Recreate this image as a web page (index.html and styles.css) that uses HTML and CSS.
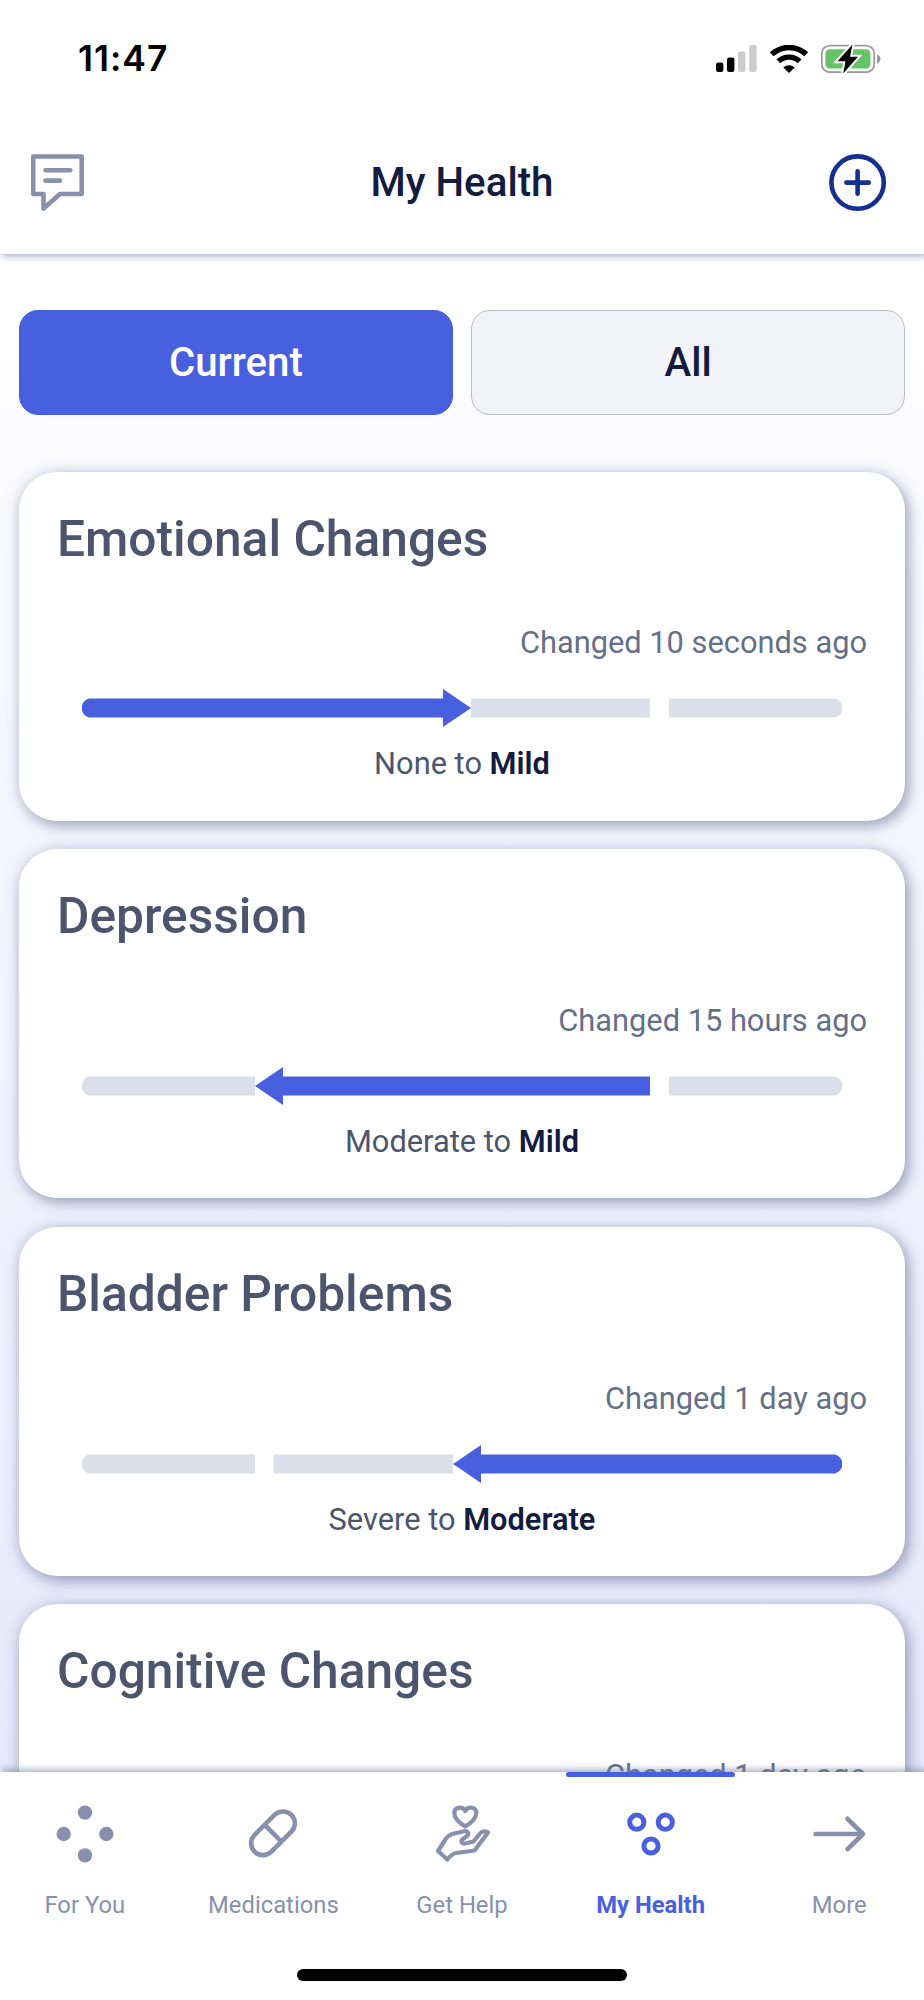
FILE: index.html
```html
<!DOCTYPE html>
<html lang="en">
<head>
<meta charset="UTF-8">
<meta name="viewport" content="width=device-width, initial-scale=1.0">
<title>My Health</title>
<link rel="stylesheet" href="styles.css">
</head>
<body>

<header class="header">
  <div class="status-bar">
    <span class="time">11:47</span>
    <div class="status-icons">
      <svg class="signal" width="41" height="28" viewBox="0 0 41 28">
        <rect x="0" y="17.5" width="7.4" height="9.5" rx="2.2"/>
        <rect x="11" y="12.5" width="7.4" height="14.5" rx="2.2"/>
        <rect x="22" y="6.5" width="7.4" height="20.5" rx="2.2" fill="#ccc"/>
        <rect x="33.2" y="0" width="7.4" height="27" rx="2.2" fill="#ccc"/>
      </svg>
      <svg class="wifi" width="38" height="28" viewBox="0 0 38 28">
        <path d="M1.8 9.3a25 25 0 0 1 34.4 0" fill="none" stroke="#000" stroke-width="5.4"/>
        <path d="M8.4 16.4a15.2 15.2 0 0 1 21.2 0" fill="none" stroke="#000" stroke-width="5.4"/>
        <path d="M13.3 22.4a8.6 8.6 0 0 1 11.4 0L19 28z"/>
      </svg>
      <svg class="battery" width="60" height="30" viewBox="0 0 60 30">
        <rect x="0.8" y="1.6" width="52.4" height="26.6" rx="8" fill="none" stroke="#999" stroke-width="1.7"/>
        <path d="M56 10.5c4.6 1.6 4.6 7.4 0 9z" fill="#999"/>
        <rect x="4.4" y="5.2" width="45" height="19.4" rx="4.5" fill="#65c466"/>
        <path d="M31.5 0.5L16.5 17.2H24.5L22.2 29.5L37 12.7H29z" stroke="#fff" stroke-width="4"/>
        <path d="M31.5 0.5L16.5 17.2H24.5L22.2 29.5L37 12.7H29z"/>
      </svg>
    </div>
  </div>
  <div class="title-bar">
    <svg width="54" height="58" viewBox="0 0 54 58" fill="none" stroke="#8990ad" stroke-width="4.6" stroke-linecap="round" stroke-linejoin="round">
      <path d="M2.2 2.5h48.5v37.5H29L12.5 54.5V40H2.2z"/>
      <path d="M14.500 16.200H39.300M14.500 26.600H29"/>
    </svg>
    <h1>My Health</h1>
    <svg width="58" height="58" viewBox="0 0 58 58" fill="none" stroke="#15308f" stroke-width="4.6" stroke-linecap="round">
      <circle cx="28.600" cy="28.600" r="26.200"/>
      <path d="M28.600 17.400v22.400M17.400 28.600h22.400"/>
    </svg>
  </div>
</header>

<main>
  <div class="tabs">
    <button class="tab active">Current</button>
    <button class="tab">All</button>
  </div>

  <section class="card">
    <h2>Emotional Changes</h2>
    <p class="changed">Changed 10 seconds ago</p>
    <svg class="scale" viewBox="0 0 760 38">
      <path class="on" d="M7 9.5H361V0L389 19L361 38V28.5H7A9.8 9.8 0 0 1 7 9.5z"/>
      <path d="M389 9.5h179v19H389z"/>
      <path d="M587 9.5H753A9.8 9.8 0 0 1 753 28.5H587z"/>
    </svg>
    <p class="result">None to <b>Mild</b></p>
  </section>

  <section class="card">
    <h2>Depression</h2>
    <p class="changed">Changed 15 hours ago</p>
    <svg class="scale" viewBox="0 0 760 38">
      <path d="M173 9.5H7A9.8 9.8 0 0 0 7 28.5H173z"/>
      <path class="on" d="M568 9.5H201V0L173 19L201 38V28.5H568z"/>
      <path d="M587 9.5H753A9.8 9.8 0 0 1 753 28.5H587z"/>
    </svg>
    <p class="result">Moderate to <b>Mild</b></p>
  </section>

  <section class="card">
    <h2>Bladder Problems</h2>
    <p class="changed">Changed 1 day ago</p>
    <svg class="scale" viewBox="0 0 760 38">
      <path d="M173 9.5H7A9.8 9.8 0 0 0 7 28.5H173z"/>
      <path d="M191.5 9.5h179.5v19H191.5z"/>
      <path class="on" d="M753 9.5H399V0L371 19L399 38V28.5H753A9.8 9.8 0 0 0 753 9.5z"/>
    </svg>
    <p class="result">Severe to <b>Moderate</b></p>
  </section>

  <section class="card">
    <h2>Cognitive Changes</h2>
    <p class="changed">Changed 1 day ago</p>
  </section>
</main>

<nav class="nav">
  <div class="nav-items">
    <a class="nav-item">
      <svg viewBox="0 0 60 60" fill="#8990ad">
        <circle cx="30" cy="8.6" r="7.2"/>
        <circle cx="8.7" cy="30" r="7.2"/>
        <circle cx="51.3" cy="30" r="7.2"/>
        <circle cx="30" cy="51.4" r="7.2"/>
      </svg>
      <span>For You</span>
    </a>
    <a class="nav-item">
      <svg viewBox="0 0 60 60" fill="none" stroke="#8990ad" stroke-width="4.6">
        <g transform="rotate(-45 30 29.3)">
          <rect x="4" y="17.4" width="52" height="23.8" rx="11.9"/>
          <path d="M30 17.4v23.8"/>
        </g>
      </svg>
      <span>Medications</span>
    </a>
    <a class="nav-item">
      <svg viewBox="0 0 60 60" fill="none" stroke="#8990ad" stroke-width="4.2" stroke-linejoin="round" stroke-linecap="round">
        <path d="M33.3 22.3C27 18.8 22.3 13.5 22.3 8.8C22.3 3 30.5 1.8 33.3 7C36 1.8 44.3 3 44.3 8.8C44.3 13.5 39.5 18.8 33.3 22.3z"/>
        <path d="M6 47L15.3 55.5C18.5 51.5 20.5 49.5 24 49L42.5 46.500L56 28.500C53 27 50 27 48 29.500L41.500 37.500L33 39.500C29 40 28.500 37 31 35L35 32C38 28.500 35 26.500 32 27.200L20 30C17.500 30.800 16 32 14 34.500z"/>
      </svg>
      <span>Get Help</span>
    </a>
    <a class="nav-item active">
      <svg viewBox="0 0 60 60" fill="none" stroke="#485fe0" stroke-width="5">
        <circle cx="15.8" cy="18.2" r="7.1"/>
        <circle cx="44.3" cy="18.2" r="7.1"/>
        <circle cx="30" cy="42" r="7.1"/>
      </svg>
      <span>My Health</span>
    </a>
    <a class="nav-item">
      <svg viewBox="0 0 60 60" fill="none" stroke="#8990ad" stroke-width="4.6" stroke-linecap="round" stroke-linejoin="round">
        <path d="M6.5 30H54M38.5 14.8L54 30L38.5 45.2"/>
      </svg>
      <span>More</span>
    </a>
  </div>
  <div class="home-indicator"></div>
</nav>

</body>
</html>
```
FILE: styles.css
```css
* {
  box-sizing: border-box;
}

body {
  margin: 0;
  height: 2000px;
  overflow: hidden;
  display: flex;
  flex-direction: column;
  font-family: Roboto, "Liberation Sans", sans-serif;
  color: #131b3f;
  background: #fff;
}

h1, h2, p {
  margin: 0;
  font-weight: 500;
}

svg {
  display: block;
}

/* header */
.header {
  flex: none;
  height: 253.5px;
  background: #fefefe;
  box-shadow: 2px 3px 6px rgba(110,120,160,0.5);
  position: relative;
  z-index: 2;
}

.status-bar {
  height: 112px;
  padding: 5px 43px 0 78px;
  display: flex;
  align-items: center;
  justify-content: space-between;
}

.time {
  font-family: Inter, sans-serif;
  font-size: 35.5px;
  font-weight: 600;
  letter-spacing: 1px;
  color: #000;
}

.status-icons {
  display: flex;
  align-items: center;
  gap: 13px;
}

.title-bar {
  height: 141px;
  padding: 0 37px 0 31px;
  display: grid;
  grid-template-columns: 64px 1fr 58px;
  align-items: center;
}

h1 {
  font-size: 40.3px;
  text-align: center;
}

/* list */
main {
  flex: 1;
  min-height: 0;
  overflow: hidden;
  padding: 56.5px 19px 0;
  background: linear-gradient(to bottom, #fff 0%, #fcfcff 13%, #f2f4fe 50%, #e6e9fb 100%);
}

.tabs {
  display: flex;
  gap: 18.6px;
  margin-bottom: 56.7px;
}

.tab {
  flex: 1;
  height: 105px;
  border: 1px solid #b9bcc8;
  border-radius: 19px;
  background: #f1f3f7;
  color: #131b3f;
  font-family: inherit;
  font-size: 40.2px;
  font-weight: 500;
}

.tab.active {
  background: #485fe0;
  border-color: #485fe0;
  color: #fff;
}

.card {
  height: 349px;
  margin-bottom: 28.6px;
  padding: 37px 38px 0;
  border-radius: 38px;
  background: #fff;
  box-shadow: 4px 5px 14px rgba(95,105,140,0.5), 0 0 16px rgba(110,120,160,0.25);
}

h2 {
  font-size: 49.7px;
  line-height: 60px;
  color: #4d546d;
}

.changed {
  margin-top: 56.8px;
  font-size: 30.8px;
  font-weight: 400;
  line-height: 36px;
  text-align: right;
  color: #666f88;
}

.scale {
  width: 760px;
  height: 38px;
  margin: 28px auto 0;
  fill: #dbdfea;
}

.scale .on {
  fill: #485fe0;
}

.result {
  margin-top: 19px;
  font-size: 30.8px;
  font-weight: 400;
  line-height: 36px;
  text-align: center;
  color: #4d546d;
}

.result b {
  font-weight: 600;
  color: #131b3f;
}

/* bottom navigation */
.nav {
  flex: none;
  height: 227.7px;
  background: #fefefe;
  box-shadow: 2px -3px 6px rgba(110,120,160,0.55);
  position: relative;
  z-index: 2;
}

.nav-items {
  display: grid;
  grid-template-columns: repeat(5, 1fr);
  gap: 19px;
}

.nav-item {
  height: 197px;
  padding-top: 32px;
  display: flex;
  flex-direction: column;
  align-items: center;
  font-size: 23.8px;
  line-height: 28px;
  color: #8990ad;
}

.nav-item.active {
  color: #485fe0;
  font-weight: 700;
}

.nav-item.active::before {
  content: "";
  width: 100%;
  height: 5px;
  margin: -32px 0 27px;
  border-radius: 3px;
  background: #485fe0;
}

.nav-item svg {
  width: 60px;
  height: 60px;
  margin-bottom: 27px;
}

.home-indicator {
  width: 330px;
  height: 12px;
  margin: 0 auto;
  border-radius: 6px;
  background: #000;
}
```
